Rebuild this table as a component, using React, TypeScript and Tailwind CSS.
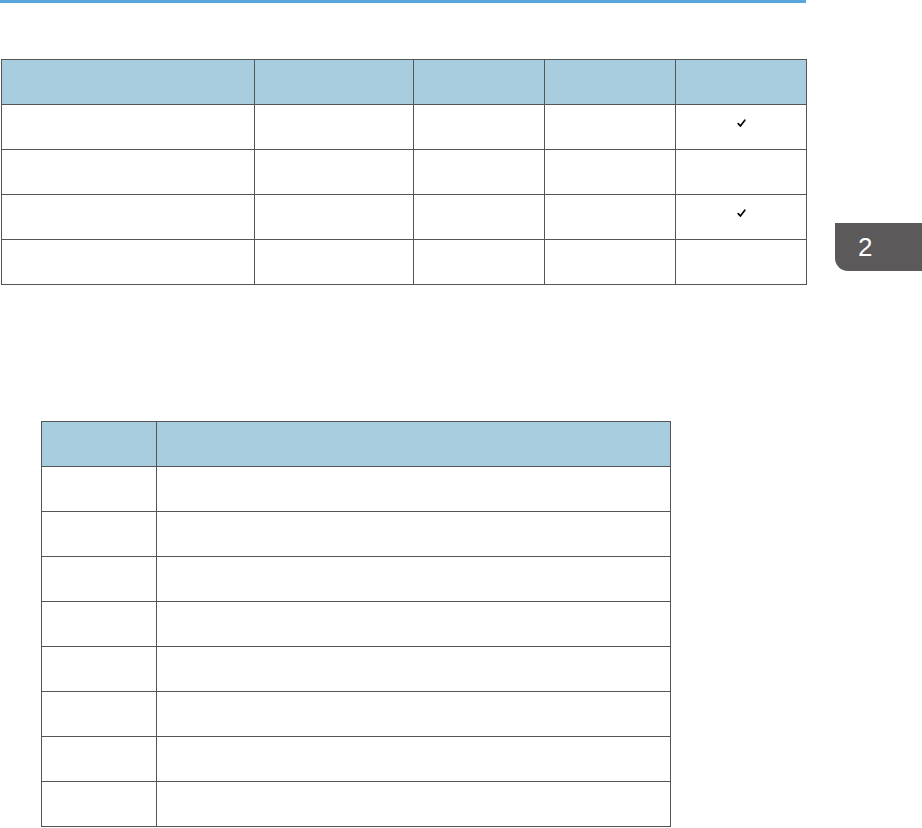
const rows1 = [true, false, true, false];
const rows2 = Array.from({ length: 8 });

function Check() {
  return (
    <svg width="9" height="9" viewBox="0 0 9 9" className="block">
      <path
        d="M1.2 4.6 L3.4 7 L7.8 1.2"
        fill="none"
        stroke="#000"
        strokeWidth="1.7"
        strokeLinecap="round"
        strokeLinejoin="round"
      />
    </svg>
  );
}

export default function App() {
  return (
    <div className="relative h-[828px] w-[922px] overflow-hidden bg-white font-['Liberation_Sans',sans-serif]">
      {/* Top rule */}
      <div className="h-[3px] w-[806px] bg-[#5aa4dc]" />

      <div className="mt-[56px] flex items-start">
        {/* Table 1 */}
        <div className="ml-[1px] grid grid-cols-[252px_158px_130px_130px_130px] auto-rows-[44px] gap-px bg-[#555555] p-px">
          <div className="bg-[#a7cddf]" />
          <div className="bg-[#a7cddf]" />
          <div className="bg-[#a7cddf]" />
          <div className="bg-[#a7cddf]" />
          <div className="bg-[#a7cddf]" />
          {rows1.map((checked, i) => (
            <div key={i} className="contents">
              <div className="bg-white" />
              <div className="bg-white" />
              <div className="bg-white" />
              <div className="bg-white" />
              <div className="flex justify-center bg-white pt-[14px] pl-[1px]">
                {checked && <Check />}
              </div>
            </div>
          ))}
        </div>

        {/* Chapter tab */}
        <div className="ml-[28px] mt-[164px] h-[48px] flex-1 rounded-bl-[13px] bg-[#5b5959] pl-[23px] pt-[9px] text-[26px] leading-[30px] text-white">
          2
        </div>
      </div>

      {/* Table 2 */}
      <div className="ml-[41px] mt-[136px] grid w-[630px] grid-cols-[114px_513px] auto-rows-[44px] gap-px bg-[#555555] p-px">
        <div className="bg-[#a7cddf]" />
        <div className="bg-[#a7cddf]" />
        {rows2.map((_, i) => (
          <div key={i} className="contents">
            <div className="bg-white" />
            <div className="bg-white" />
          </div>
        ))}
      </div>
    </div>
  );
}
